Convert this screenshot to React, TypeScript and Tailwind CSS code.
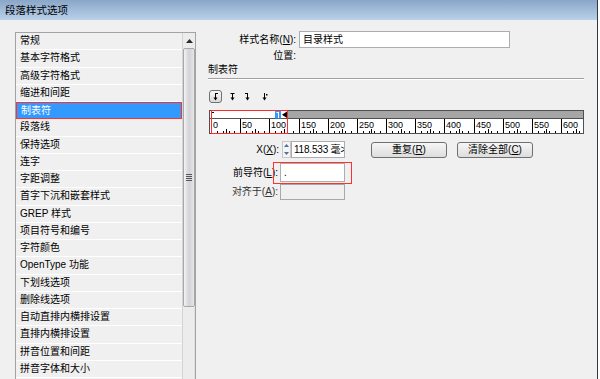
import React from "react";

const items = [
  "常规",
  "基本字符格式",
  "高级字符格式",
  "缩进和间距",
  "制表符",
  "段落线",
  "保持选项",
  "连字",
  "字距调整",
  "首字下沉和嵌套样式",
  "GREP 样式",
  "项目符号和编号",
  "字符颜色",
  "OpenType 功能",
  "下划线选项",
  "删除线选项",
  "自动直排内横排设置",
  "直排内横排设置",
  "拼音位置和间距",
  "拼音字体和大小",
];

function Ruler() {
  const step = 29.17;
  const majors = Array.from({ length: 13 }, (_, i) => i);
  const minors: { x: number; h: number }[] = [];
  for (let u = 0; u <= 630; u += 10) {
    if (u % 50 === 0) continue;
    const x = 2 + (u / 50) * step;
    if (x > 373) break;
    minors.push({ x, h: 2 });
  }
  for (let u = 25; u <= 630; u += 50) {
    const x = 2 + (u / 50) * step;
    if (x > 373) break;
    minors.push({ x, h: 4 });
  }
  return (
    <svg width="375" height="24" viewBox="0 0 375 24" className="block">
      <rect x="0" y="0" width="375" height="24" fill="#ffffff" />
      <rect x="78" y="1" width="296" height="7.5" fill="#a6a6a6" />
      <rect x="0.5" y="0.5" width="374" height="23" fill="none" stroke="#505050" />
      <line x1="0" y1="8.5" x2="375" y2="8.5" stroke="#505050" />
      <line x1="2.5" y1="2" x2="2.5" y2="8" stroke="#000" />
      <line x1="2.5" y1="2.5" x2="5" y2="2.5" stroke="#000" />
      <rect x="66" y="1" width="6" height="7.5" fill="#3399ff" />
      <line x1="69.5" y1="2" x2="69.5" y2="8" stroke="#fff" />
      <line x1="67.5" y1="2.5" x2="69.5" y2="2.5" stroke="#fff" />
      <polygon points="78,1.5 78,8 73,4.75" fill="#000" />
      {majors.map((i) => {
        const x = Math.round(2 + i * step) + 0.5;
        return (
          <g key={i}>
            <line x1={x} y1="9" x2={x} y2="23" stroke="#000" />
            <text
              x={x + 1.5}
              y="17.5"
              fontSize="9"
              fontFamily='"Liberation Sans", sans-serif'
              fill="#000"
            >
              {i * 50}
            </text>
          </g>
        );
      })}
      {minors.map((m, i) => {
        const x = Math.round(m.x) + 0.5;
        return <line key={"m" + i} x1={x} y1={23 - m.h} x2={x} y2="23" stroke="#000" />;
      })}
      <rect x="2.5" y="0.5" width="76" height="23" fill="none" stroke="#ff2a2a" />
    </svg>
  );
}

function TabIcon({ kind }: { kind: "left" | "center" | "right" | "decimal" }) {
  return (
    <svg width="7" height="9" viewBox="0 0 7 9" className="block">
      <line x1="3.5" y1="1" x2="3.5" y2="7" stroke="#000" />
      <polygon points="1.5,5.5 5.5,5.5 3.5,8.5" fill="#000" />
      {kind === "left" && <line x1="3.5" y1="1.5" x2="6" y2="1.5" stroke="#000" />}
      {kind === "center" && <line x1="1.5" y1="1.5" x2="5.5" y2="1.5" stroke="#000" />}
      {kind === "right" && <line x1="1" y1="1.5" x2="3.5" y2="1.5" stroke="#000" />}
      {kind === "decimal" && <rect x="5" y="2" width="1.5" height="1.5" fill="#000" />}
    </svg>
  );
}

export default function App() {
  return (
    <div
      className="w-[600px] h-[379px] overflow-hidden bg-white flex text-[10px] text-black"
      style={{ fontFamily: '"Liberation Sans", "Noto Sans CJK SC", sans-serif' }}
    >
      <div className="w-[598px] h-full flex flex-col border-r border-[#2f3a44]">
        <div className="h-[20px] shrink-0 bg-gradient-to-b from-[#8aa6c8] to-[#b9d1ea] flex items-center pl-[5px] text-[10.5px] leading-none">
          段落样式选项
        </div>
        <div className="flex-1 bg-[#f0f0f0] flex min-h-0">
          <div className="pl-[15px] pt-[12px] h-full">
            <div className="w-[181px] h-full border-l border-t border-r border-[#a3a3a3] flex overflow-hidden">
              <div className="w-[166px] flex flex-col">
                {items.map((it, i) => (
                  <div
                    key={it}
                    className={
                      "h-[17.25px] shrink-0 flex items-center pl-[4px] leading-none border-b " +
                      (i === 4
                        ? "bg-[#3399ff] text-white border-[#ff3030] border"
                        : "border-white")
                    }
                  >
                    {it}
                  </div>
                ))}
              </div>
              <div className="w-[13px] flex flex-col bg-[#ececec] border-l border-[#d4d4d4]">
                <div className="h-[15px] flex items-center justify-center">
                  <svg width="7" height="4" viewBox="0 0 7 4">
                    <polygon points="0,4 7,4 3.5,0" fill="#2a2a2a" />
                  </svg>
                </div>
                <div className="h-[259px] border border-[#a8a8a8] rounded-[2px] bg-gradient-to-r from-[#f3f3f3] via-[#d2d2d8] to-[#e6e6e6] flex items-center justify-center">
                  <div className="flex flex-col gap-[1px]">
                    <div className="w-[6px] h-px bg-[#555]" />
                    <div className="w-[6px] h-px bg-[#555]" />
                    <div className="w-[6px] h-px bg-[#555]" />
                    <div className="w-[6px] h-px bg-[#555]" />
                  </div>
                </div>
                <div className="flex-1 border-r border-[#e0e0e0]" />
              </div>
            </div>
          </div>

          <div className="ml-[12px] pt-[11px] flex flex-col">
            <div className="h-[17px] flex items-center">
              <div className="w-[88px] text-right leading-none">
                样式名称(<span className="underline">N</span>):
              </div>
              <div className="ml-[3px] w-[211px] h-[17px] bg-white border border-[#abadb3] flex items-center pl-[3px] leading-none">
                目录样式
              </div>
            </div>
            <div className="mt-[2px] h-[12px] flex items-center">
              <div className="w-[88px] text-right leading-none">位置:</div>
            </div>
            <div className="mt-[2px] h-[12px] flex items-center leading-none">制表符</div>
            <div className="mt-[2px] w-[376px] h-px bg-[#a0a0a0]" />
            <div className="w-[376px] h-px bg-white" />

            <div className="mt-[10px] h-[13px] flex items-center">
              <div className="ml-[1px] w-[13px] h-[13px] border border-[#707070] rounded-[3px] bg-gradient-to-b from-[#f8f8f8] to-[#dcdcdc] flex items-center justify-center">
                <TabIcon kind="left" />
              </div>
              <div className="ml-[7px]">
                <TabIcon kind="center" />
              </div>
              <div className="ml-[8px]">
                <TabIcon kind="right" />
              </div>
              <div className="ml-[10px]">
                <TabIcon kind="decimal" />
              </div>
            </div>

            <div className="mt-[7px] ml-[1px]">
              <Ruler />
            </div>

            <div className="mt-[7px] h-[17px] flex items-center">
              <div className="w-[71px] text-right leading-none">
                X(<span className="underline">X</span>):
              </div>
              <div className="ml-[3px] w-[9px] h-[17px] bg-[#f4f4f4] border border-[#c8c8c8] flex flex-col items-center justify-around">
                <svg width="5" height="3" viewBox="0 0 5 3">
                  <polygon points="0,3 5,3 2.5,0" fill="#4d6f9c" />
                </svg>
                <svg width="5" height="3" viewBox="0 0 5 3">
                  <polygon points="0,0 5,0 2.5,3" fill="#4d6f9c" />
                </svg>
              </div>
              <div className="w-[54px] h-[17px] bg-white border border-[#abadb3] flex items-center pl-[2px] leading-none overflow-hidden whitespace-nowrap tracking-[-0.2px]">
                118.533 毫&gt;
              </div>
              <div className="ml-[26px] w-[76px] h-[16px] border border-[#707070] rounded-[3px] bg-gradient-to-b from-[#f6f6f6] to-[#dddddd] flex items-center justify-center leading-none">
                重复(<span className="underline">R</span>)
              </div>
              <div className="ml-[10px] w-[76px] h-[16px] border border-[#707070] rounded-[3px] bg-gradient-to-b from-[#f6f6f6] to-[#dddddd] flex items-center justify-center leading-none">
                清除全部(<span className="underline">C</span>)
              </div>
            </div>

            <div className="mt-[5px] h-[19px] flex items-center">
              <div className="w-[70px] text-right leading-none">
                前导符(<span className="underline">L</span>):
              </div>
              <div className="relative ml-[2px] w-[65px] h-[19px] bg-white border border-[#abadb3] flex items-center pl-[3px] leading-none">
                .
                <div className="absolute left-[-8px] top-[-2px] w-[79px] h-[22px] border border-[#ff3030]" />
              </div>
            </div>

            <div className="mt-[2px] h-[16px] flex items-center">
              <div className="w-[70px] text-right leading-none text-[#333]">
                对齐于(<span className="underline">A</span>):
              </div>
              <div className="ml-[2px] w-[65px] h-[16px] bg-[#f0f0f0] border border-[#a8a8a8]" />
            </div>
          </div>
        </div>
      </div>
    </div>
  );
}
